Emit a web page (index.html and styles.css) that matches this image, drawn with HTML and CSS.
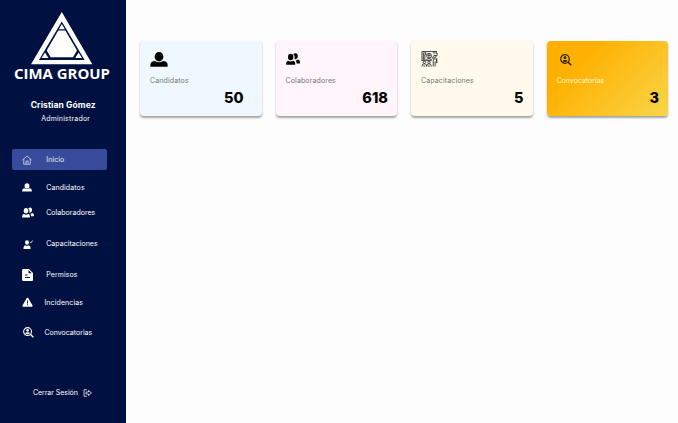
FILE: index.html
```html
<!DOCTYPE html>
<html lang="es">
<head>
<meta charset="utf-8">
<title>CIMA GROUP</title>
<link rel="stylesheet" href="styles.css">
</head>
<body>
<svg width="0" height="0" class="defs">
  <symbol id="user" viewBox="0 0 18 15"><ellipse cx="9" cy="4.7" rx="4.4" ry="4.7"/><path d="M.4 14.8v-2.3Q.6 9.3 5 9q4 2.7 8 0 4.4.3 4.6 3.500v2.300z"/></symbol>
  <symbol id="users" viewBox="0 0 14 12"><path d="M7.300.9Q10-.8 11.500 1.500q1 3-1.300 4.500-1 .4-1.700 0 .8-3-1.200-5.100z"/><ellipse cx="4.700" cy="4" rx="2.700" ry="3.200"/><path d="M.2 11.800V10q.2-1.900 2-2.200 2.500 1.600 5 0 1.800.3 2 2.200v1.800zM9.700 7.500q1.200 0 2-1 2.200.2 2.200 2.300v1.700h-3.300q0-2-.9-3z"/></symbol>
  <symbol id="search" viewBox="0 0 24 24"><circle cx="10" cy="10" r="8.600" fill="none" stroke="currentColor" stroke-width="2.400"/><path d="m16 16 6.500 6.500" stroke="currentColor" stroke-width="3"/><circle cx="10" cy="7.300" r="2.800"/><path d="M5 14.300q0-3 5-3t5 3q-5 3-10 0z"/></symbol>
</svg>
<div class="app">
  <aside class="sidebar">
    <svg class="logo" viewBox="0 0 96 70">
      <path fill="#fff" fill-rule="evenodd" d="M47.800 0 78.300 52.300H17zM47.800 9.500 25 48h45.600z"/>
      <path fill="#fff" d="M44.300 18.500h7L63 38.500l-4 6.700H36.700l-4-6.700zM47.800 12l3 5.200h-6zM31 40.600l3.400 5.300h-6.800zM64.600 40.600l3.400 5.300h-6.800z"/>
      <text x="0" y="66.500" textLength="96" lengthAdjust="spacingAndGlyphs">CIMA GROUP</text>
    </svg>
    <h1 class="name">Cristian Gómez</h1>
    <p class="role">Administrador</p>
    <nav class="menu">
      <a class="item active"><svg class="icon" viewBox="0 0 20 20"><path fill="none" stroke="currentColor" stroke-width="1.400" d="m1 10 9-8 9 8M3.500 8v10.500h13V8M8 18v-6h4v6"/></svg><span class="l-ini">Inicio</span></a>
      <a class="item candidates"><svg class="icon small"><use href="#user"/></svg><span class="l-can">Candidatos</span></a>
      <a class="item staff"><svg class="icon"><use href="#users"/></svg><span class="l-col">Colaboradores</span></a>
      <a class="item training"><svg class="icon small" viewBox="0 0 10 9"><ellipse cx="4" cy="2.500" rx="2" ry="2.200"/><path d="M.5 9V7.500Q.8 5.500 2.300 5.200q1.700 1 3.400 0 1.600.3 1.800 2.300V9z"/><path fill="none" stroke="currentColor" stroke-width="1" d="m6.800 2 .9.800 2-1.900"/></svg><span class="l-cap">Capacitaciones</span></a>
      <a class="item permits"><svg class="icon doc" viewBox="0 0 11 12"><path fill-rule="evenodd" d="M1.300 0H7l4 4v7q0 1-1 1H1.300q-1.200 0-1.200-1V1q0-1 1.200-1zM3 5.500v1h2.500v-1zM3 8v1h5V8zM6.500 1v3.300h3.300z"/></svg><span class="l-per">Permisos</span></a>
      <a class="item incidents"><svg class="icon" viewBox="0 0 12 11"><path fill-rule="evenodd" d="M5.200.7q.8-1 1.600 0l4.700 8q.5 1.300-.9 1.500H1.400Q0 10 .5 8.700zM5.500 3.200v3.300h1V3.200zM5.500 7.500v1h1v-1z"/></svg><span class="l-inc">Incidencias</span></a>
      <a class="item calls"><svg class="icon"><use href="#search"/></svg><span class="l-con">Convocatorias</span></a>
    </nav>
    <a class="logout"><span>Cerrar Sesión</span><svg viewBox="0 0 18 16"><path fill="none" stroke="currentColor" stroke-width="1.500" d="M8 1.500H2v13h6M6 6h5V3l6 5-6 5v-3H6z"/></svg></a>
  </aside>
  <main class="cards">
    <section class="card blue"><svg class="pic big"><use href="#user"/></svg><h2 class="l-can">Candidatos</h2><strong>50</strong></section>
    <section class="card pink"><svg class="pic pair"><use href="#users"/></svg><h2 class="l-col">Colaboradores</h2><strong>618</strong></section>
    <section class="card cream"><svg class="pic class" viewBox="0 0 17 17"><g fill="none" stroke="currentColor" stroke-width=".95"><path d="M.5 10V.5h16M2 9.500V2h3M3.500 3.500v6M12 2h4.500v3H13M0 10h11M4.500 1.500v3"/><circle cx="8" cy="5" r="2.600"/><path d="M6 4.500h4M8 3v5M5 9q3-2 6 0"/><circle cx="14" cy="6" r="1.300"/><path d="M11 6l1.500 2.500h3.500v4M12.500 9v7.500M14.500 11v5.500M16.300 8v5"/><circle cx="3" cy="12" r="1.300"/><circle cx="8" cy="12" r="1.300"/><path d="M.5 16.500q0-3 2.500-3t2.500 3q0-3 2.500-3t2.500 3M2 16h2M7 16h2"/></g></svg><h2 class="l-cap">Capacitaciones</h2><strong>5</strong></section>
    <section class="card gold"><svg class="pic lens"><use href="#search"/></svg><h2 class="l-con">Convocatorias</h2><strong>3</strong></section>
  </main>
</div>
</body>
</html>
```
FILE: styles.css
```css
* { box-sizing: border-box; }
body { margin: 0; background: #fdfdfd; font-family: Inter, "Open Sans", sans-serif; }
h1, h2, p { margin: 0; font-weight: 400; }
svg { display: block; fill: currentColor; flex: none; }
.defs { position: absolute; }
.app { display: flex; height: 423px; overflow: hidden; }
.sidebar { width: 126.300px; flex: none; background: #001141; color: #fff; padding-top: 12px; display: flex; flex-direction: column; }
.logo { width: 96px; height: 70px; margin-left: 14px; }
.logo text { font: 700 15px "Open Sans", sans-serif; fill: #fff; }
.name { margin-top: 16px; font-size: 8.500px; line-height: 14px; font-weight: 700; text-align: center; letter-spacing: .1px; }
.role { margin: 2px 0 0 5px; font-size: 7px; line-height: 10px; text-align: center; letter-spacing: .2px; }
.menu { margin-top: 25px; display: flex; flex-direction: column; }
.item { display: flex; align-items: center; height: 20px; margin-left: 12px; width: 94.500px; padding-left: 10px; font-size: 7px; line-height: 10px; letter-spacing: .1px; }
.item span { margin-left: 13.200px; }
.icon { width: 11px; height: 11px; margin-bottom: 1px; }
.active { height: 21px; border-radius: 2px; background: #384b9b; color: #e8eaf5; }
.active .icon { width: 10px; height: 10px; margin: 0 1px 0 0; }
.small { width: 10px; height: 9px; margin: 0 1px 1px 0; }
.training .small { margin: 1px 0 0 1px; }
.doc { height: 12px; }
.candidates { margin-top: 8px; }
.staff { margin-top: 5px; }
.staff .icon { width: 12px; margin: 0 -1px 2px 0; }
.training { margin-top: 11px; }
.permits { margin-top: 11px; }
.incidents { margin-top: 8px; }
.calls { margin-top: 10px; }
.calls .icon { margin: 0 -.5px 2px .5px; }
.incidents span, .calls span { margin-left: 11.400px; }
.item .l-col, .item .l-cap { letter-spacing: .03px; }
.calls .l-con { letter-spacing: 0; }
.logout { display: flex; align-items: center; margin: 45px 0 0 33px; font-size: 7px; line-height: 10px; letter-spacing: -.05px; gap: 5px; }
.logout svg { width: 9px; height: 8px; }
.cards { display: grid; grid-template-columns: repeat(4, 121.500px); gap: 14px; padding: 41.200px 0 0 14.200px; align-content: start; }
.card { height: 74.500px; padding: 10px 9.500px; border-radius: 4px; box-shadow: 0 1.500px 2px rgba(0, 0, 0, .34); display: grid; grid-template-rows: 24.800px 10px 24px; }
.blue { background: #f0f8ff; }
.pink { background: #fff5fa; }
.cream { background: #fffaeb; }
.gold { background: linear-gradient(135deg, #ffb000 25%, #f9d548); }
.card h2 { font-size: 7px; line-height: 10px; color: #777; letter-spacing: .13px; }
.gold h2 { color: #fff3d0; }
.gold .l-con { letter-spacing: 0; }
.card strong { font-size: 14.500px; line-height: 24px; font-weight: 800; text-align: right; color: #000; }
.blue strong { padding-right: 9px; }
.pic { width: 17px; height: 16px; }
.big { width: 18px; height: 15px; margin: 1.300px 0 0 .5px; }
.pair { width: 14px; height: 12px; margin: 1.500px 0 0 1px; }
.lens { width: 12px; height: 12px; margin: 3.300px 0 0 3.500px; color: #2d2408; }
.class { color: #333; }
```
